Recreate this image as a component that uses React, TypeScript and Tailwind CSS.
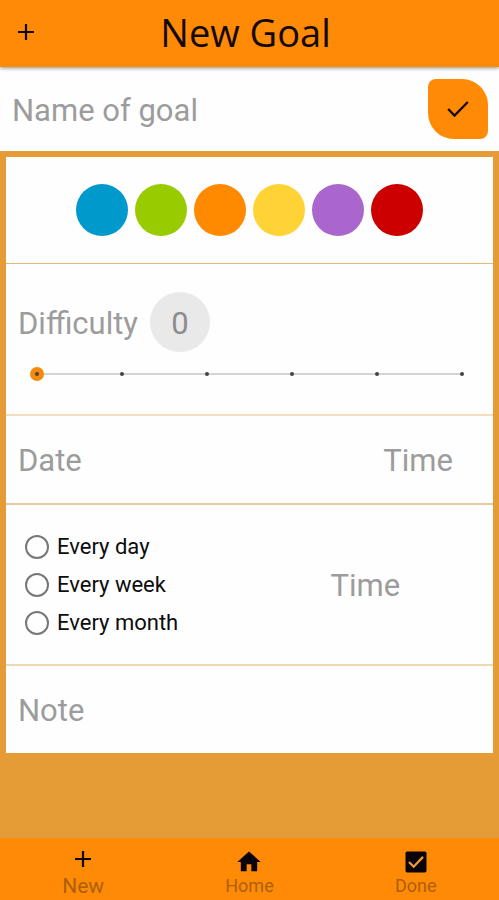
import { useState } from "react";

const swatches = [
  { name: "Blue", color: "bg-[#0099cc]" },
  { name: "Green", color: "bg-[#99cc00]" },
  { name: "Orange", color: "bg-[#ff8a00]" },
  { name: "Yellow", color: "bg-[#ffd335]" },
  { name: "Purple", color: "bg-[#aa66cc]" },
  { name: "Red", color: "bg-[#cc0000]" },
];

const intervals = ["Every day", "Every week", "Every month"];

const fieldText =
  "min-w-0 bg-transparent pt-[3px] text-[31px] leading-10 text-[#9c9c9c] outline-none placeholder:text-[#9c9c9c] placeholder:opacity-100";

function PlusIcon() {
  return (
    <svg viewBox="0 0 24 24" className="size-6" fill="none" stroke="#0c0500" strokeWidth="2.2" aria-hidden="true">
      <path d="M12 4v16M4 12h16" />
    </svg>
  );
}

function HomeIcon() {
  return (
    <svg viewBox="0 0 24 24" className="size-7" fill="#080408" aria-hidden="true">
      <path d="M10 20v-6h4v6h5v-8h3L12 3 2 12h3v8z" />
    </svg>
  );
}

function DoneIcon() {
  return (
    <svg viewBox="0 0 24 24" className="size-7" aria-hidden="true">
      <rect x="3" y="3" width="18" height="18" rx="1.5" fill="#080408" />
      <path d="M6 12l4 4 8-8.4" fill="none" stroke="#f59a3a" strokeWidth="1.9" />
    </svg>
  );
}

export default function App() {
  const [difficulty, setDifficulty] = useState(0);
  const [interval, setRepeat] = useState("");

  return (
    <div className="flex min-h-screen flex-col bg-[#e59c37] font-['Roboto',sans-serif]">
      <header className="relative z-10 grid h-[67px] grid-cols-[52px_1fr_60px] items-center bg-[#ff8a05] shadow-[0_1px_4px_rgba(0,0,0,0.45)]">
        <button type="button" aria-label="Add goal" className="flex justify-center pb-1">
          <PlusIcon />
        </button>
        <h1 className="pb-1 text-center font-['Open_Sans',sans-serif] text-[38px] leading-none text-[#140900]">
          New Goal
        </h1>
      </header>

      <div className="flex h-[84px] items-center justify-between bg-[#fefefe] pr-[11px] pl-3">
        <input aria-label="Name of goal" placeholder="Name of goal" className={`${fieldText} flex-1`} />
        <button
          type="button"
          aria-label="Save goal"
          className="flex size-[60px] items-center justify-center rounded-[8px_26px_8px_26px] bg-[#ff8a05]"
        >
          <svg viewBox="0 0 24 24" className="size-7" fill="none" stroke="#140900" strokeWidth="2" aria-hidden="true">
            <path d="M3.6 12l5.4 5.6L20.4 6" />
          </svg>
        </button>
      </div>

      <main className="mx-[6px] mt-[6px] mb-6 bg-[#fefefe]">
        <div className="flex h-[107px] items-center justify-center gap-[7px] border-b border-[#e3b878]">
          {swatches.map((s) => (
            <button key={s.name} type="button" aria-label={s.name} className={`size-[52px] rounded-full ${s.color}`} />
          ))}
        </div>

        <div className="h-[152px] border-b-2 border-[#f0dfba] pt-7">
          <div className="flex items-center gap-3 pl-3">
            <label htmlFor="difficulty" className="pt-[3px] text-[31px] leading-10 text-[#9c9c9c]">
              Difficulty
            </label>
            <output
              htmlFor="difficulty"
              className="flex size-[60px] items-center justify-center rounded-full bg-[#e9e9e9] pt-[3px] text-[31px] leading-10 text-[#8c8c8c]"
            >
              {difficulty}
            </output>
          </div>
          <div className="relative mt-[14px] mr-6 ml-6 flex h-4 items-center">
            <input
              id="difficulty"
              type="range"
              min={0}
              max={5}
              value={difficulty}
              onChange={(e) => setDifficulty(Number(e.target.value))}
              className="h-4 w-full appearance-none bg-transparent bg-[linear-gradient(#d4d4d4,#d4d4d4)] bg-[length:calc(100%-14px)_2px] bg-center bg-no-repeat outline-none [&::-webkit-slider-thumb]:size-[14px] [&::-webkit-slider-thumb]:appearance-none [&::-webkit-slider-thumb]:rounded-full [&::-webkit-slider-thumb]:bg-[#f58a0c]"
            />
            <div className="pointer-events-none absolute inset-x-[5px] inset-y-0 flex items-center justify-between">
              {[0, 1, 2, 3, 4, 5].map((n) => (
                <span key={n} className="size-1 rounded-full bg-[#444]" />
              ))}
            </div>
          </div>
        </div>

        <div className="flex h-[89px] items-center justify-between border-b-2 border-[#e6c9a0] pr-10 pl-3">
          <input aria-label="Date" placeholder="Date" className={`${fieldText} w-40`} />
          <input aria-label="Time" placeholder="Time" className={`${fieldText} w-32 text-right`} />
        </div>

        <div className="grid h-[161px] grid-cols-2 items-center border-b-2 border-[#efd9b3]">
          <fieldset aria-label="Repeat" className="flex flex-col gap-2 pl-[19px]">
            {intervals.map((label) => (
              <label key={label} className="flex h-[30px] items-center gap-2 text-[22px] text-[#0c0c0c]">
                <input
                  type="radio"
                  name="repeat"
                  checked={interval === label}
                  onChange={() => setRepeat(label)}
                  className="size-6 appearance-none rounded-full border-2 border-[#777] checked:bg-[#ff8a05]"
                />
                {label}
              </label>
            ))}
          </fieldset>
          <input aria-label="Repeat time" placeholder="Time" className={`${fieldText} w-full pr-3 text-center`} />
        </div>

        <div className="flex h-[87px] items-center px-3">
          <input aria-label="Note" placeholder="Note" className={`${fieldText} flex-1`} />
        </div>
      </main>

      <nav className="mt-auto grid h-[62px] grid-cols-3 bg-[#ff8a05] text-[#ac5f0c]">
        <a href="#new" className="flex flex-col items-center pt-[9px] text-[21px] leading-6">
          <PlusIcon />
          <span className="mt-[3px]">New</span>
        </a>
        <a href="#home" className="flex flex-col items-center pt-[10px] text-lg leading-5">
          <HomeIcon />
          <span>Home</span>
        </a>
        <a href="#done" className="flex flex-col items-center pt-[10px] text-lg leading-5">
          <DoneIcon />
          <span>Done</span>
        </a>
      </nav>
    </div>
  );
}
